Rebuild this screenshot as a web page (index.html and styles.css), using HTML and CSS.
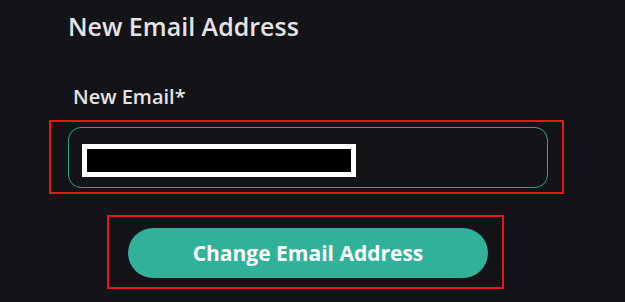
FILE: index.html
```html
<!DOCTYPE html>
<html lang="en">
<head>
    <meta charset="UTF-8">
    <meta name="viewport" content="width=device-width, initial-scale=1.0">
    <title>New Email Address</title>
    <link rel="stylesheet" href="styles.css">
</head>
<body>

    <!-- Change Email Form -->
    <div class="container">
        <h2>New Email Address</h2>
        <label class="field-label" for="new-email">New Email*</label>
        <div class="mark field-mark">
            <div class="email-input" id="new-email">
                <span class="redacted"></span>
            </div>
        </div>
        <div class="mark button-mark">
            <button class="submit-btn">Change Email Address</button>
        </div>
    </div>

</body>
</html>
```

FILE: styles.css
```css
body { margin: 0; background-color: #131318; font-family: "Open Sans", Arial, sans-serif; color: #e4e4e6; }
.container { display: flex; flex-direction: column; align-items: flex-start; margin-left: 49px; }
h2 { margin: 0; padding: 9px 0 0 19px; font-size: 25px; line-height: 34px; font-weight: 600; }
.field-label { margin-top: 40px; padding-left: 24px; font-size: 20px; line-height: 27px; font-weight: 600; }
.mark { border: 2px solid #e3181c; }
.field-mark { margin-top: 10px; padding: 5px 14px 4px 17px; }
.email-input { box-sizing: border-box; width: 480px; height: 61px; padding: 16px 13px; border: 1px solid #2ba58c; border-radius: 13px; }
.redacted { display: block; box-sizing: border-box; width: 274px; height: 33px; background-color: #000; border: 5px solid #fff; }
.button-mark { margin: 21px 0 0 58px; padding: 11px 14px 9px 19px; }
.submit-btn { display: block; width: 360px; height: 50px; border: none; border-radius: 25px; background-color: #31b09a; color: #fff; font-family: "Open Sans", Arial, sans-serif; font-size: 21px; font-weight: 700; cursor: pointer; }
```
